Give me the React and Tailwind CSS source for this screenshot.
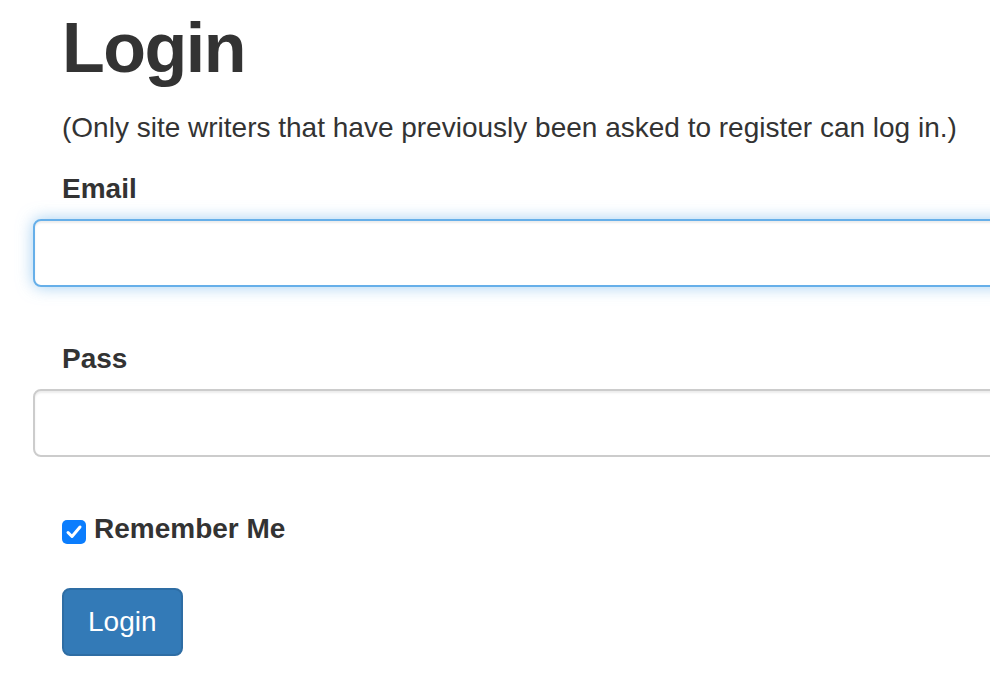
import React from 'react';

// Login form, Bootstrap 3 look at 2x
const Field = ({ label, focused }) => (
  <div className="flex flex-col">
    <label className="pl-[29px] text-[28px] leading-[40px] font-bold text-[#333] mb-[10px]">{label}</label>
    <div
      className={`w-[1000px] h-[68px] rounded-[8px] border-2 bg-white ${
        focused
          ? 'border-[#66afe9] shadow-[inset_0_2px_2px_rgba(0,0,0,0.075),0_0_16px_rgba(102,175,233,0.6)]'
          : 'border-[#ccc] shadow-[inset_0_2px_2px_rgba(0,0,0,0.075)]'
      }`}
    ></div>
  </div>
);

const App = () => {
  return (
    <div
      className="w-[990px] h-[690px] overflow-hidden bg-white text-[#333]"
      style={{ fontFamily: '"Liberation Sans", Arial, sans-serif' }}
    >
      <div className="pl-[33px] pt-[10px]">
        <h1 className="pl-[29px] text-[70px] leading-[77px] font-bold tracking-[-1.5px] text-[#333] mb-[21px]">Login</h1>
        <p className="pl-[29px] text-[28px] leading-[40px] mb-[21px]">
          (Only site writers that have previously been asked to register can log in.)
        </p>

        <Field label="Email" focused />
        <div className="h-[52px]"></div>
        <Field label="Pass" />

        <div className="pl-[29px] mt-[52px] flex items-center h-[40px]">
          <span className="w-[24px] h-[24px] rounded-[5px] bg-[#0b7dfd] flex items-center justify-center mt-[6px]">
            <svg width="20" height="20" viewBox="0 0 20 20" fill="none">
              <path d="M4 10.5 L8 14.5 L16 5" stroke="white" strokeWidth="3" strokeLinecap="round" strokeLinejoin="round" />
            </svg>
          </span>
          <span className="ml-[8px] text-[28px] leading-[40px] font-bold">Remember Me</span>
        </div>

        <div className="pl-[29px] mt-[39px]">
          <button className="h-[68px] px-[24px] rounded-[8px] border-2 border-[#2e6da4] bg-[#337ab7] text-white text-[28px] leading-[40px]">
            Login
          </button>
        </div>
      </div>
    </div>
  );
};

export default App;
